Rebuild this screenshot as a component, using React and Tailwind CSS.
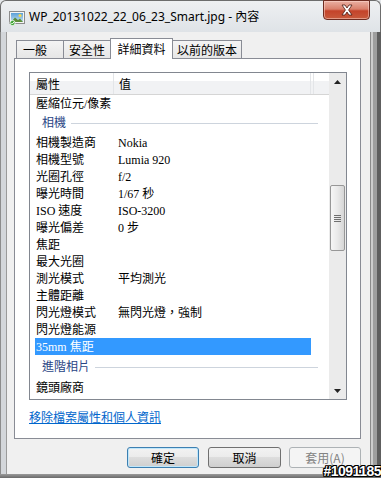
import React from "react";

const cameraRows = [
  ["相機製造商", "Nokia"],
  ["相機型號", "Lumia 920"],
  ["光圈孔徑", "f/2"],
  ["曝光時間", "1/67 秒"],
  ["ISO 速度", "ISO-3200"],
  ["曝光偏差", "0 步"],
  ["焦距", ""],
  ["最大光圈", ""],
  ["測光模式", "平均測光"],
  ["主體距離", ""],
  ["閃光燈模式", "無閃光燈，強制"],
  ["閃光燈能源", ""],
  ["35mm 焦距", "", true],
];

function PhotoIcon() {
  return (
    <svg width="16" height="16" viewBox="0 0 16 16">
      <defs>
        <linearGradient id="sky" x1="0" y1="0" x2="0" y2="1">
          <stop offset="0" stopColor="#5aa0d8" />
          <stop offset="1" stopColor="#c8e2f2" />
        </linearGradient>
      </defs>
      <rect x="0.5" y="1.5" width="15" height="12" fill="#f4f4f4" stroke="#8c8c8c" />
      <rect x="2" y="3" width="12" height="9" fill="url(#sky)" />
      <circle cx="11" cy="5.5" r="1.5" fill="#f7d84a" />
      <path d="M2 12 L6 7.5 L9 10 L11 8.5 L14 12 Z" fill="#5d8f3a" />
      <circle cx="3.5" cy="13" r="2.6" fill="#3fa535" stroke="#ffffff" strokeWidth="0.8" />
      <path d="M2.3 13 L3.3 14 L4.9 12" stroke="#ffffff" strokeWidth="0.9" fill="none" />
    </svg>
  );
}

function CloseGlyph() {
  return (
    <svg width="14" height="12" viewBox="0 0 14 12">
      <path
        d="M2 1 L5 1 L7 4 L9 1 L12 1 L8.6 6 L12 11 L9 11 L7 8 L5 11 L2 11 L5.4 6 Z"
        fill="#ffffff"
        stroke="#4a1a12"
        strokeWidth="0.8"
      />
    </svg>
  );
}

function Row({ label, value, selected }) {
  return (
    <div
      className={
        selected
          ? "ml-[5px] w-[276px] h-[17px] flex items-center bg-[#3399ff] text-white"
          : "ml-[5px] w-[276px] h-[17px] flex items-center text-black"
      }
    >
      <span className="w-[83px] pl-[1px] whitespace-nowrap">{label}</span>
      <span className="whitespace-nowrap">{value}</span>
    </div>
  );
}

function Group({ title, className }) {
  return (
    <div className={className}>
      <span className="text-[#2a4685] whitespace-nowrap">{title}</span>
      <div className="flex-1 h-px ml-[5px] bg-[#cdd4dd]" />
    </div>
  );
}

function Arrow({ down }) {
  return (
    <svg width="7" height="4" viewBox="0 0 7 4">
      <path d={down ? "M0 0 L7 0 L3.5 4 Z" : "M0 4 L7 4 L3.5 0 Z"} fill="#222" />
    </svg>
  );
}

export default function App() {
  return (
    <div className="w-[381px] h-[478px] overflow-hidden relative flex flex-col bg-[#e4e7ea] font-['Noto_Sans_CJK_TC',sans-serif] text-[12px]">
      {/* title bar */}
      <div className="h-[32px] flex items-start bg-[linear-gradient(#eef0f2,#dfe3e7)] border-t border-x border-[#6d6d6d] rounded-t-[6px] pl-[7px] pr-[10px]">
        <div className="mt-[9px] ml-[1px]">
          <PhotoIcon />
        </div>
        <div className="mt-[8px] ml-[4px] text-[12px] leading-[16px] text-black font-['Noto_Sans','Noto_Sans_CJK_TC',sans-serif] whitespace-nowrap">
          WP_20131022_22_06_23_Smart.jpg - 內容
        </div>
        <div className="ml-auto w-[47px] h-[20px] -mt-px flex items-center justify-center rounded-b-[4px] border border-[#6e2c21] bg-[linear-gradient(#eab0a3_0,#d9806c_45%,#c4432a_55%,#c85a3c_100%)] shadow-[inset_0_0_0_1px_rgba(255,220,210,0.5)]">
          <CloseGlyph />
        </div>
      </div>

      <div className="flex-1 flex">
        {/* left frame */}
        <div className="w-[7px] bg-[linear-gradient(to_right,#8c8c8c_0,#8c8c8c_1px,#d3d6da_1px,#d3d6da_6px,#9a9a9a_6px)]" />

        {/* client area */}
        <div className="flex-1 bg-[#f0f0f0] flex flex-col">
          {/* tabs */}
          <div className="mt-[6px] ml-[9px] h-[20px] flex items-end">
            <div className="w-[47px] h-[18px] flex items-center pl-[6px] border-t border-l border-[#898c95] bg-[linear-gradient(#f4f4f4,#e6e6e6)] leading-none">
              一般
            </div>
            <div className="w-[47px] h-[18px] flex items-center justify-center border-t border-l border-[#898c95] bg-[linear-gradient(#f4f4f4,#e6e6e6)] leading-none">
              安全性
            </div>
            <div className="relative z-10 w-[63px] h-[21px] -mb-px flex items-center justify-center border-t border-x border-[#898c95] bg-white leading-none">
              詳細資料
            </div>
            <div className="w-[69px] h-[18px] flex items-center justify-center border-t border-r border-[#898c95] bg-[linear-gradient(#f4f4f4,#e6e6e6)] leading-none">
              以前的版本
            </div>
          </div>

          {/* tab panel */}
          <div className="ml-[7px] w-[347px] h-[381px] border border-[#898c95] bg-white flex flex-col">
            <div className="mt-[13px] ml-[14px] w-[318px] h-[328px] border border-[#828790] flex font-['Liberation_Serif','Noto_Sans_CJK_TC',serif]">
              <div className="flex-1 flex flex-col overflow-hidden">
                {/* header */}
                <div className="h-[22px] flex border-b border-[#d5d5d5] bg-[linear-gradient(#ffffff_0,#ffffff_36%,#f1f2f4_36%,#f1f2f4_100%)] font-['Noto_Sans_CJK_TC',sans-serif]">
                  <div className="w-[83px] flex items-center pl-[6px]">屬性</div>
                  <div className="w-[197px] flex items-center pl-[5px] border-l border-[#e3e5e8]">值</div>
                  <div className="w-[3px] border-l border-[#e3e5e8]" />
                  <div className="flex-1 border-l border-[#e3e5e8]" />
                </div>

                <Row label="壓縮位元/像素" value="" />
                <Group title="相機" className="ml-[5px] w-[283px] h-[22px] flex items-center pl-[7px]" />
                {cameraRows.map(([label, value, selected]) => (
                  <Row key={label} label={label} value={value} selected={selected} />
                ))}
                <Group title="進階相片" className="ml-[5px] w-[283px] h-[24px] flex items-center pl-[7px]" />
                <Row label="鏡頭廠商" value="" />
              </div>

              {/* scrollbar */}
              <div className="w-[17px] bg-[#ebebeb] flex flex-col">
                <div className="h-[17px] flex items-center justify-center">
                  <Arrow />
                </div>
                <div className="h-[95px]" />
                <div className="ml-[1px] w-[15px] h-[66px] rounded-[2px] border border-[#979797] bg-[linear-gradient(to_right,#f6f6f6,#e9e9e9_50%,#d6d6d6)] flex flex-col items-center justify-center gap-[1px]">
                  <div className="w-[7px] h-[1px] bg-[#6f6f6f]" />
                  <div className="w-[7px] h-[1px] bg-[#6f6f6f]" />
                  <div className="w-[7px] h-[1px] bg-[#6f6f6f]" />
                  <div className="w-[7px] h-[1px] bg-[#6f6f6f]" />
                </div>
                <div className="flex-1" />
                <div className="h-[17px] flex items-center justify-center">
                  <Arrow down />
                </div>
              </div>
            </div>

            <div className="mt-[10px] ml-[14px] leading-[14px]">
              <span className="text-[#0066cc] underline">移除檔案屬性和個人資訊</span>
            </div>
          </div>

          {/* buttons */}
          <div className="mt-[8px] flex">
            <button
              type="button"
              className="ml-[120px] w-[72px] h-[21px] rounded-[3px] border border-[#3c7fb1] bg-[linear-gradient(#f2f2f2_0,#ebebeb_50%,#dddddd_50%,#cfcfcf_100%)] shadow-[inset_0_0_0_1px_#bfe6fa] text-black leading-none"
            >
              確定
            </button>
            <button
              type="button"
              className="ml-[9px] w-[73px] h-[21px] rounded-[3px] border border-[#707070] bg-[linear-gradient(#f2f2f2_0,#ebebeb_50%,#dddddd_50%,#cfcfcf_100%)] text-black leading-none"
            >
              取消
            </button>
            <button
              type="button"
              className="ml-[8px] w-[72px] h-[21px] rounded-[3px] border border-[#adb2b5] bg-[#f4f4f4] text-[#838383] leading-none"
            >
              套用(A)
            </button>
          </div>
        </div>

        {/* right frame */}
        <div className="w-[11px] bg-[linear-gradient(to_right,#8a8a8a_0,#8a8a8a_1px,#cdcdcd_1px,#cdcdcd_3px,#9e9e9e_3px,#9e9e9e_7px,#5e5e5e_7px)]" />
      </div>

      {/* bottom frame */}
      <div className="h-[4px] bg-[linear-gradient(#9a9a9a,#6a6a6a)]" />

      <div className="absolute right-0 bottom-0 text-white font-bold text-[14px] leading-none tracking-[-0.5px] font-['Liberation_Sans',sans-serif] [text-shadow:1px_0_#000,-1px_0_#000,0_1px_#000,0_-1px_#000,1px_1px_#000,-1px_-1px_#000,1px_-1px_#000,-1px_1px_#000]">
        #1091185
      </div>
    </div>
  );
}
